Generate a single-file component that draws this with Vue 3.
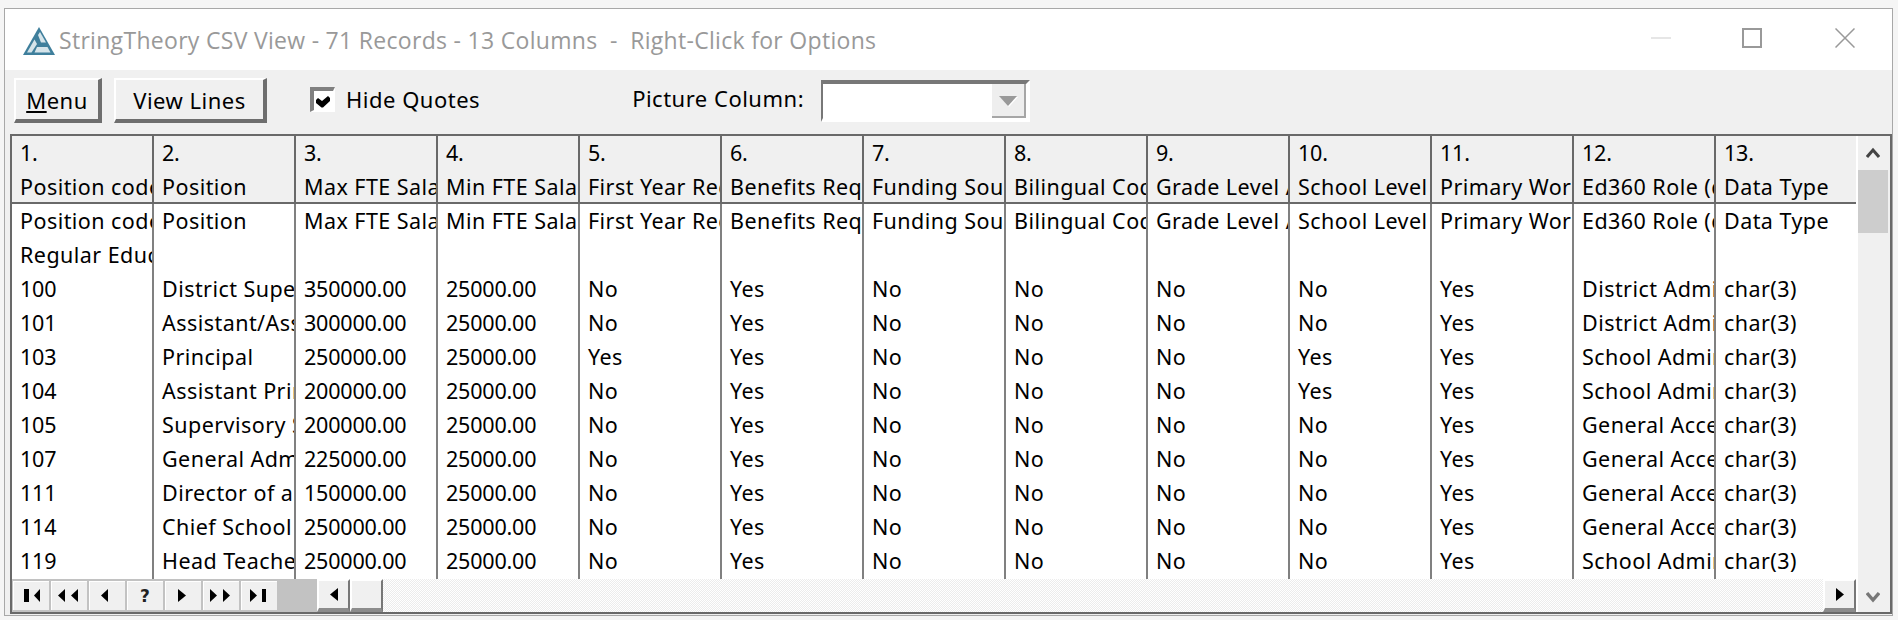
<script setup>
const head = ['Position code','Position','Max FTE Salary','Min FTE Salary','First Year Required','Benefits Required','Funding Source','Bilingual Code','Grade Level Assignment','School Level Assignment','Primary Work Location','Ed360 Role (district)','Data Type']
const mk = (c, p, max, fy, sl, role) => [c, p, max, '25000.00', fy, 'Yes', 'No', 'No', 'No', sl, 'Yes', role, 'char(3)']
const rows = [
  head,
  ['Regular Education','','','','','','','','','','','',''],
  mk('100','District Superintendent','350000.00','No','No','District Administrator'),
  mk('101','Assistant/Associate Superintendent','300000.00','No','No','District Administrator'),
  mk('103','Principal','250000.00','Yes','Yes','School Administrator'),
  mk('104','Assistant Principal','200000.00','No','Yes','School Administrator'),
  mk('105','Supervisory Staff','200000.00','No','No','General Access'),
  mk('107','General Administrator','225000.00','No','No','General Access'),
  mk('111','Director of a Program','150000.00','No','No','General Access'),
  mk('114','Chief School Officer','250000.00','No','No','General Access'),
  mk('119','Head Teacher','250000.00','No','No','School Administrator'),
  Array(13).fill(''),
]
const isNum = (v) => /^[\d.]+$/.test(v)
const nav = [
  { label: 'first', pts: ['11,10 16,10 16,23 11,23', '27,10 27,23 21,16.5'] },
  { label: 'rewind', pts: ['14,10 14,23 7,16.5', '27,10 27,23 20,16.5'] },
  { label: 'prev', pts: ['19,10 19,23 12,16.5'] },
  { label: 'info', pts: [], text: '?' },
  { label: 'next', pts: ['13,10 13,23 21,16.5'] },
  { label: 'forward', pts: ['7,10 7,23 14,16.5', '20,10 20,23 27,16.5'] },
  { label: 'last', pts: ['9,10 9,23 16,16.5', '21,10 25,10 25,23 21,23'] },
]
</script>

<template>
  <div class="page">
    <div class="window">
      <div class="title">
        <svg class="logo" viewBox="0 0 32 28" width="32" height="28">
          <path d="M16 0 L32 28 H0 Z" fill="#3f7f9c" />
          <path d="M15 8 L17 5 L23 15.5 L18 15.5 Z" fill="#d5e4ea" />
          <path d="M11.5 12.5 L14 17 L8.5 25.5 L4 25.5 Z" fill="#d5e4ea" />
          <path d="M14 20 L24.5 20 L27.5 25.5 L11.5 25.5 Z" fill="#d5e4ea" />
        </svg>
        <span class="title-text">StringTheory CSV View - 71 Records - 13 Columns&nbsp; -&nbsp; Right-Click for Options</span>
        <div class="controls">
          <span class="min"></span>
          <span class="max"></span>
          <svg class="close" viewBox="0 0 20 20" width="20" height="20"><path d="M0.5 0.5 L19.5 19.5 M19.5 0.5 L0.5 19.5" stroke="#999" stroke-width="1.5" /></svg>
        </div>
      </div>
      <div class="body">
        <div class="toolbar">
          <button class="btn menu"><u>M</u>enu</button>
          <button class="btn lines">View Lines</button>
          <label class="check">
            <span class="box">
              <svg viewBox="0 0 19 19" width="19" height="19"><path d="M2 9 L4 7 L8 10 L14 5 L16 7 L16 10 L9 16.5 L7.5 16.5 L2 12 Z" fill="#000" /></svg>
            </span>
            Hide Quotes
          </label>
          <span class="pic-label">Picture Column:</span>
          <div class="combo">
            <div class="combo-btn">
              <svg viewBox="0 0 20 12" width="20" height="12">
                <path d="M2 2 L20 2 L11 12 Z" fill="#fff" />
                <path d="M1 1 L19 1 L10 11 Z" fill="#999" />
              </svg>
            </div>
          </div>
        </div>
        <div class="frame">
          <div class="main">
            <div class="table">
              <div class="row header">
                <div v-for="(h, i) in head" :key="i" class="cell stack">
                  <span class="num">{{ i + 1 }}.</span>
                  <span>{{ h }}</span>
                </div>
              </div>
              <div v-for="(r, ri) in rows" :key="ri" class="row">
                <div v-for="(c, ci) in r" :key="ci" class="cell" :class="{ num: isNum(c) }">{{ c }}</div>
              </div>
            </div>
            <div class="bar">
              <div class="nav">
                <button v-for="n in nav" :key="n.label" class="nav-btn">
                  <span v-if="n.text" class="q">{{ n.text }}</span>
                  <svg v-else viewBox="0 2 36 29" width="36" height="29">
                    <polygon v-for="p in n.pts" :key="p" :points="p" fill="#000" />
                  </svg>
                </button>
              </div>
              <div class="gap"></div>
              <button class="sbtn">
                <svg viewBox="0 0 33 33" width="33" height="33"><polygon points="21,10 21,23 13,16.5" fill="#000" /></svg>
              </button>
              <div class="sthumb"></div>
              <div class="hatch"></div>
              <button class="sbtn">
                <svg viewBox="0 0 33 33" width="33" height="33"><polygon points="13,10 13,23 21,16.5" fill="#000" /></svg>
              </button>
            </div>
          </div>
          <div class="vbar">
            <svg class="chev" viewBox="0 0 14 12" width="14" height="12"><path d="M1 10 L7 3 L13 10" fill="none" stroke="#444" stroke-width="3" /></svg>
            <div class="vthumb"></div>
            <div class="vspace"></div>
            <svg class="chev down" viewBox="0 0 14 12" width="14" height="12"><path d="M1 2 L7 9 L13 2" fill="none" stroke="#777" stroke-width="3.4" /></svg>
          </div>
        </div>
      </div>
    </div>
  </div>
</template>

<style>
html, body { margin: 0; background: #f4f4f4; }
</style>

<style scoped>
.page {
  width: 1898px;
  height: 620px;
  box-sizing: border-box;
  padding: 8px 5px 4px 4px;
  background: #f5f5f5;
  font-family: "Noto Sans", sans-serif;
  font-size: 21.5px;
  letter-spacing: 0.45px;
  color: #000;
  overflow: hidden;
}
.num { letter-spacing: -0.2px; }
.window {
  height: 100%;
  box-sizing: border-box;
  display: flex;
  flex-direction: column;
  border: 1px solid #a8a8a8;
  background: #f0f0f0;
}
.title {
  height: 61px;
  flex: none;
  display: flex;
  align-items: center;
  background: #fff;
  padding-left: 18px;
}
.logo { flex: none; margin-right: 4px; margin-top: 2px; }
.title-text {
  font-family: "Open Sans", sans-serif;
  font-size: 23px;
  letter-spacing: 0.3px;
  color: #999;
  white-space: nowrap;
}
.controls {
  margin-left: auto;
  display: flex;
  align-items: center;
  padding-right: 37px;
  margin-top: -4px;
}
.min { width: 20px; height: 2px; background: #e6e6e6; margin-right: 71px; }
.max { width: 20px; height: 20px; box-sizing: border-box; border: 2px solid #999; margin-right: 73px; }
.body {
  flex: 1;
  min-height: 0;
  display: flex;
  flex-direction: column;
  padding: 0 0 1px 5px;
}
.toolbar {
  height: 64px;
  flex: none;
  display: flex;
  align-items: flex-start;
  padding-left: 4px;
  font-size: 22px;
  letter-spacing: 0.5px;
}
button {
  font: inherit;
  letter-spacing: inherit;
  color: #000;
  padding: 0;
  margin: 0;
  box-sizing: border-box;
  background: #f0f0f0;
}
.btn {
  height: 45px;
  margin-top: 8px;
  border-style: solid;
  border-width: 2px 4px 4px 2px;
  border-color: #fff #6e6e6e #6e6e6e #fff;
}
.menu { width: 88px; margin-right: 12px; }
.lines { width: 153px; margin-right: 43px; }
.check {
  display: flex;
  align-items: center;
  height: 40px;
  margin-top: 9px;
  margin-right: 152px;
}
.box {
  width: 25px;
  height: 25px;
  box-sizing: border-box;
  border-style: solid;
  border-width: 4px 2px 2px 4px;
  border-color: #808080 #fff #fff #808080;
  background: #fff;
  display: flex;
  margin-right: 11px;
}
.pic-label { margin-top: 13px; margin-right: 17px; white-space: nowrap; }
.combo {
  width: 209px;
  height: 42px;
  margin-top: 10px;
  flex: none;
  box-sizing: border-box;
  border-style: solid;
  border-width: 4px 4px 4px 2px;
  border-color: #777 #fff #fff #777;
  background: #fff;
  display: flex;
  justify-content: flex-end;
}
.combo-btn {
  width: 34px;
  box-sizing: border-box;
  background: #eee;
  border-right: 2px solid #a6a6a6;
  border-bottom: 2px solid #a6a6a6;
  display: flex;
  align-items: center;
  justify-content: center;
  padding-top: 2px;
}
.frame {
  flex: 1;
  min-height: 0;
  display: flex;
  border: 2px solid #696969;
  background: #fff;
}
.main {
  flex: 1;
  min-width: 0;
  display: flex;
  flex-direction: column;
}
.table {
  flex: 1;
  min-height: 0;
  overflow: hidden;
}
.row {
  display: flex;
  height: 34px;
}
.cell {
  flex: none;
  width: 142px;
  box-sizing: border-box;
  border-right: 2px solid #808080;
  padding-left: 8px;
  line-height: 34px;
  white-space: nowrap;
  overflow: hidden;
}
.header {
  height: 66px;
  background: #f0f0f0;
  border-bottom: 2px solid #696969;
  width: 1846px;
}
.stack {
  display: flex;
  flex-direction: column;
  border-right-color: #696969;
}
.bar {
  flex: none;
  height: 33px;
  display: flex;
  background: #c2c2c2;
  box-sizing: border-box;
}
.nav { display: flex; flex: none; padding-left: 1px; }
.nav-btn {
  width: 36px;
  height: 29px;
  flex: none;
  margin: 2px 2px 2px 0;
  box-shadow: inset 1px 1px #fff;
  border: 0;
  overflow: hidden;
  display: flex;
  align-items: center;
  justify-content: center;
}
.nav-btn svg { flex: none; }
.q { font-family: "DejaVu Sans", sans-serif; font-weight: 700; font-size: 17px; letter-spacing: 0; color: #222; }
.gap { width: 38px; flex: none; }
.sbtn {
  width: 33px;
  height: 33px;
  flex: none;
  border-style: solid;
  border-width: 2px 2px 4px 2px;
  border-color: #fff #777 #8c8c8c #fff;
  overflow: hidden;
  display: flex;
  align-items: center;
  justify-content: center;
}
.sbtn svg { flex: none; margin: -2px; }
.sthumb {
  width: 33px;
  flex: none;
  box-sizing: border-box;
  background: #f0f0f0;
  border-style: solid;
  border-width: 2px 2px 4px 2px;
  border-color: #fff #777 #8c8c8c #fff;
}
.hatch {
  flex: 1;
  background: repeating-conic-gradient(#ececec 0 25%, #fff 0 50%) 0 0 / 2px 2px;
}
.vbar {
  flex: none;
  width: 34px;
  box-sizing: border-box;
  border-left: 2px solid #fff;
  background: #f0f0f0;
  display: flex;
  flex-direction: column;
  align-items: center;
  padding-right: 2px;
}
.chev { flex: none; margin: 11px 0 11px; }
.vthumb { width: 30px; height: 63px; flex: none; background: #cdcdcd; }
.vspace { flex: 1; }
.down { margin-bottom: 9px; }
</style>
